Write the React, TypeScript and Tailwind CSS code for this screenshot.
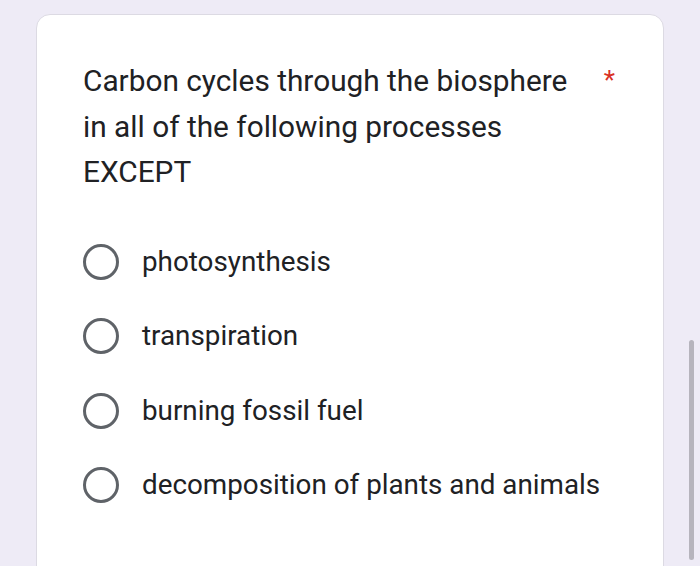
import React from 'react';

const options = [
    'photosynthesis',
    'transpiration',
    'burning fossil fuel',
    'decomposition of plants and animals',
];

const Radio = () => (
    <span className="block w-[36px] h-[36px] rounded-full border-[3.5px] border-[#5f6368] shrink-0" />
);

export default function App() {
    return (
        <div
            className="w-[700px] h-[566px] overflow-hidden bg-[#eeebf6] flex"
            style={{ fontFamily: 'Roboto, "Liberation Sans", sans-serif' }}
        >
            <div className="ml-[36px] mt-[14px] w-[628px] h-[570px] bg-white rounded-[14px] border border-[#dcdae3] pl-[46px] pr-[48px] pt-[43px]">
                <div className="flex items-start text-[#202124]">
                    <h2 className="text-[29.8px] leading-[45.5px]">
                        Carbon cycles through the biosphere
                        <br />
                        in all of the following processes
                        <br />
                        EXCEPT
                    </h2>
                    <span className="ml-auto mt-[0px] text-[#d93025] text-[26px] leading-[45px]">*</span>
                </div>
                <div className="mt-[49px] flex flex-col gap-[38.5px]">
                    {options.map((o) => (
                        <label key={o} className="flex items-center gap-[23px] text-[#202124]">
                            <Radio />
                            <span className="text-[27.8px] leading-[36px]">{o}</span>
                        </label>
                    ))}
                </div>
            </div>
            <div className="ml-[25px] mt-[340px] w-[5px] h-[220px] rounded-full bg-[#b6b4bd]" />
        </div>
    );
}
